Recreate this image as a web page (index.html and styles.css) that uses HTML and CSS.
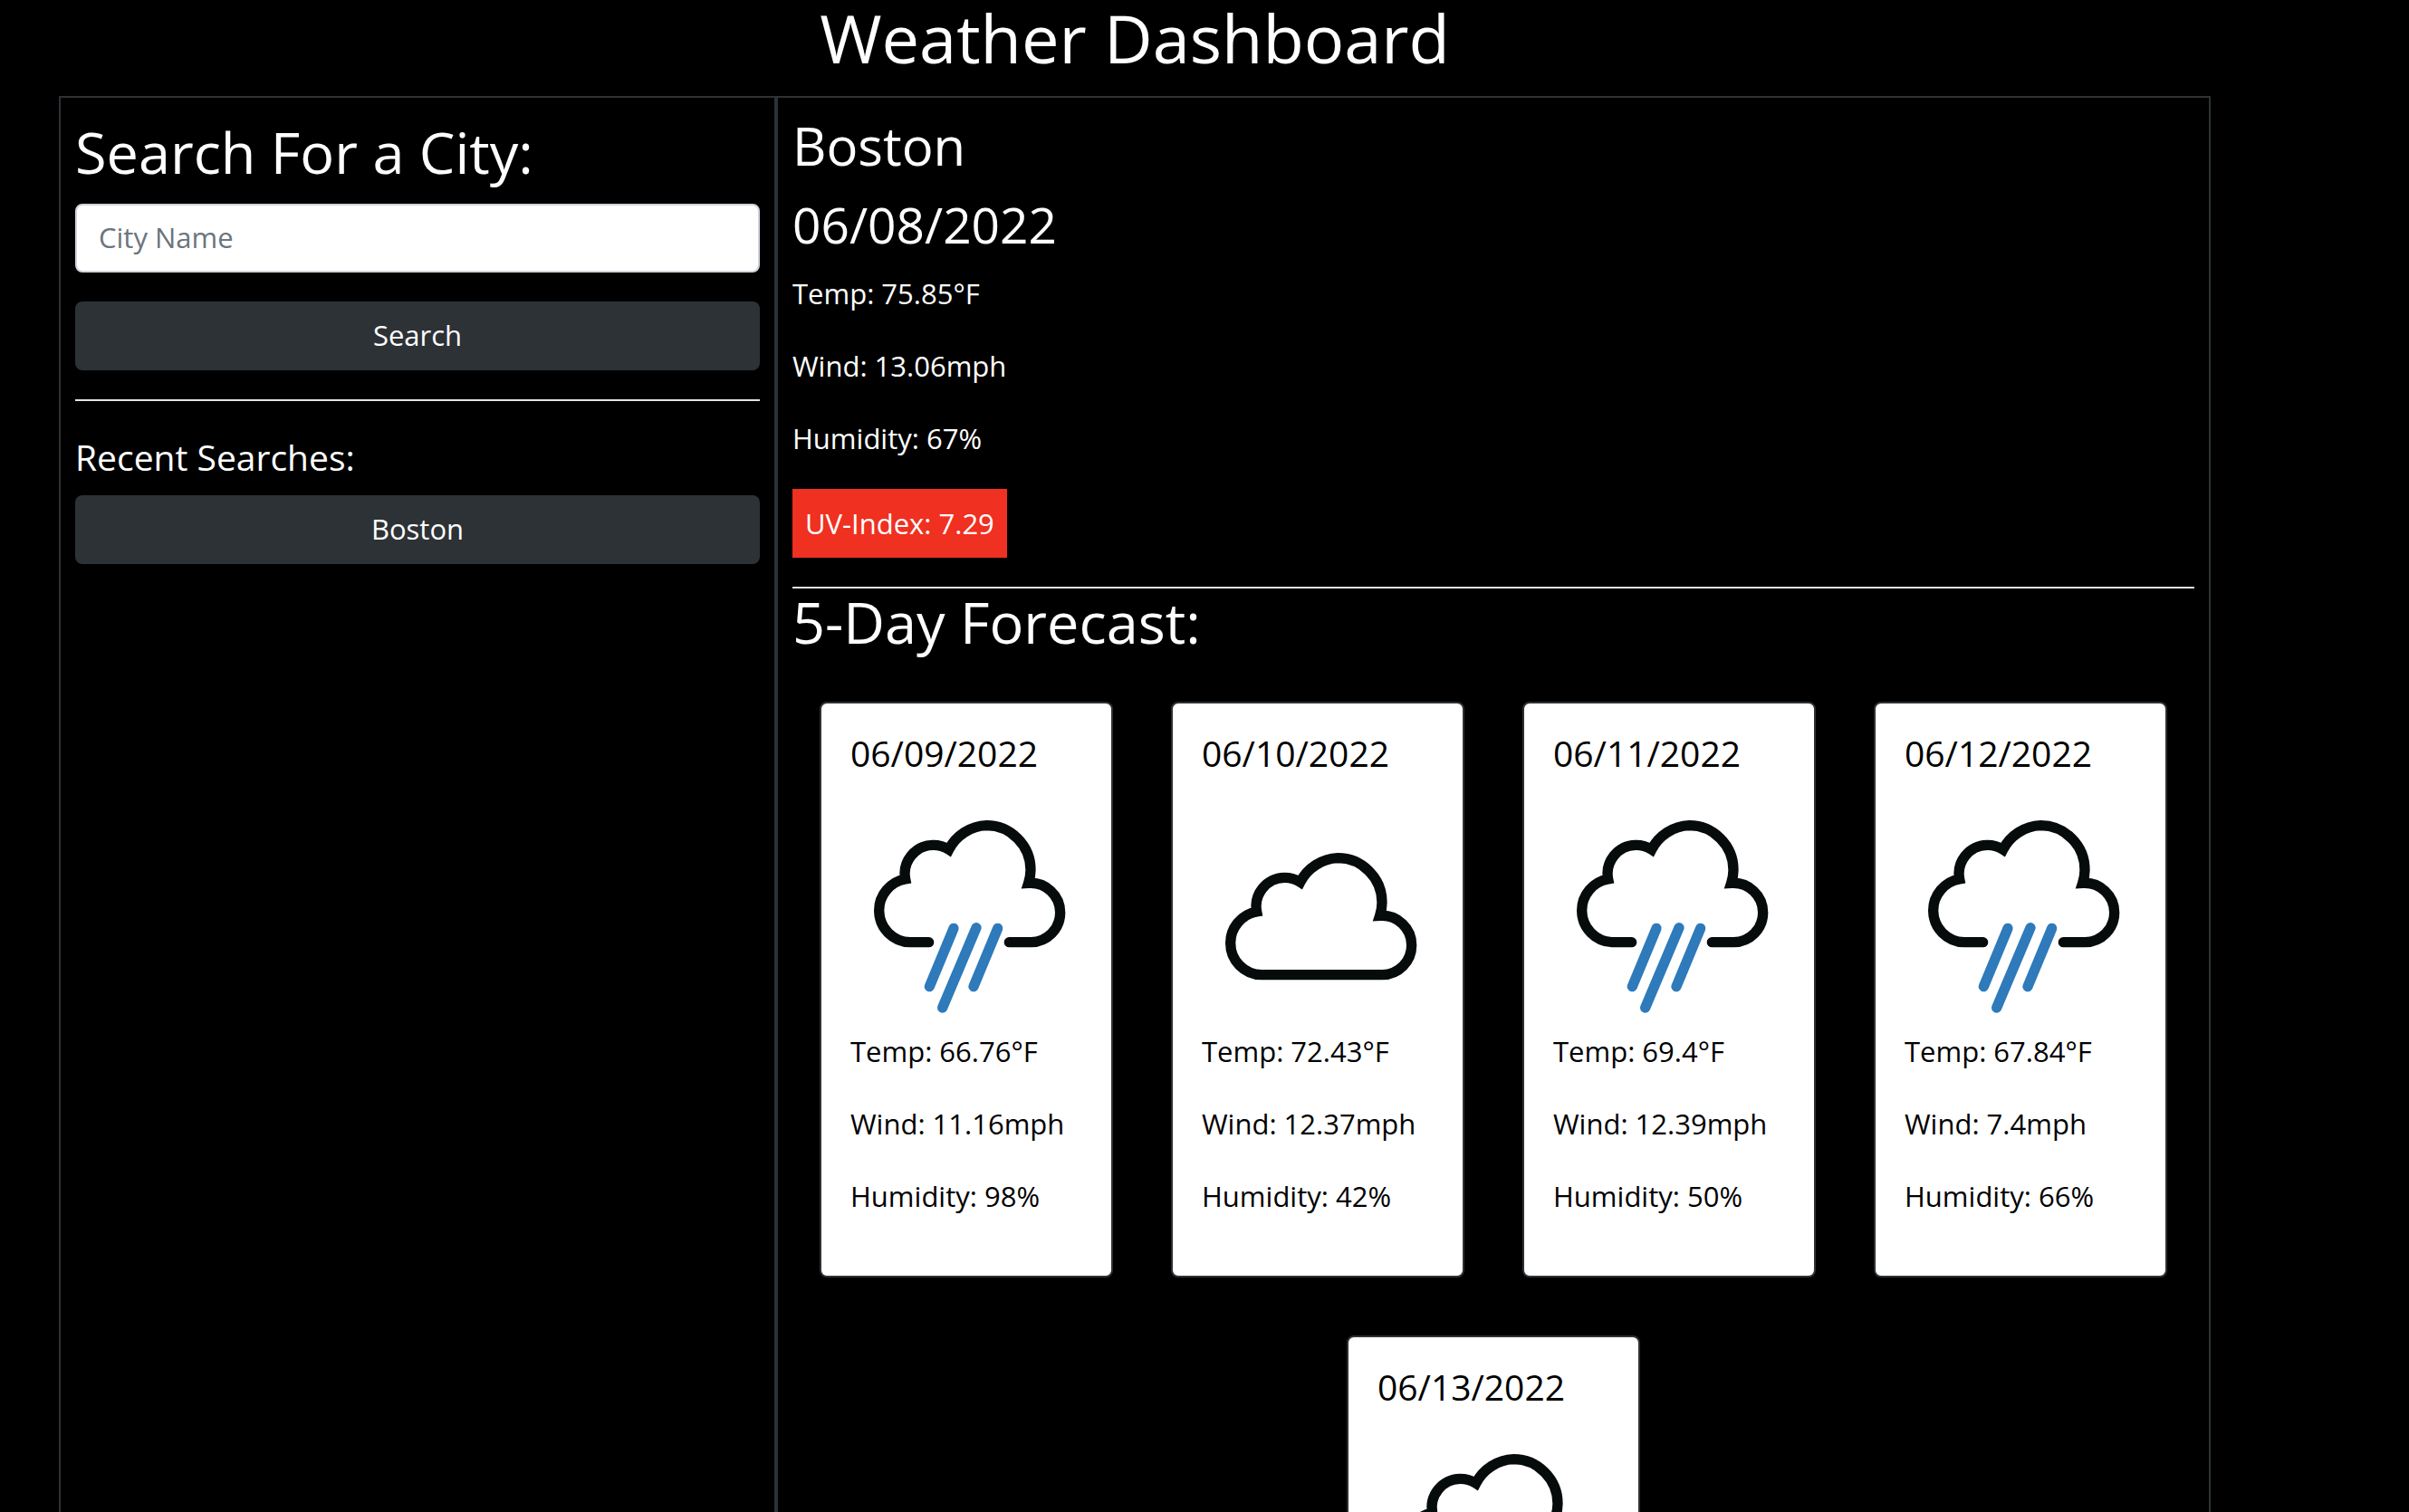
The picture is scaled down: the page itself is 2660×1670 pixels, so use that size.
FILE: index.html
```
<!DOCTYPE html>
<html lang="en">
<head>
<meta charset="utf-8">
<meta name="viewport" content="width=device-width, initial-scale=1">
<title>Weather Dashboard</title>
<link rel="stylesheet" href="styles.css">
</head>
<body>
<svg class="sprite" aria-hidden="true">
  <symbol id="rain" viewBox="-33 -24 768 768">
    <path class="cloud-line" d="M227 455H165A105 105 0 0 1 62 350A105 105 0 0 1 149 246A95 95 0 0 1 240 133A95 95 0 0 1 293 148A147 147 0 0 1 418 68A147 147 0 0 1 564 215A147 147 0 0 1 557 259A98 98 0 0 1 662 357A98 98 0 0 1 565 455H493"/>
    <path class="rain-line" d="M309 409L229 602M384 407L272 672M455 409L375 602"/>
  </symbol>
  <symbol id="cloud" viewBox="-33 -132 768 768">
    <path class="cloud-line" d="M165 455A105 105 0 0 1 62 350A105 105 0 0 1 149 246A95 95 0 0 1 240 133A95 95 0 0 1 293 148A147 147 0 0 1 418 68A147 147 0 0 1 564 215A147 147 0 0 1 557 259A98 98 0 0 1 662 357A98 98 0 0 1 565 455Z"/>
  </symbol>
</svg>
<div class="page">
  <header class="header"><h1 class="title">Weather Dashboard</h1></header>
  <main class="columns">
    <aside class="panel search-panel">
      <form class="search-form">
        <label class="heading" for="city">Search For a City:</label>
        <input class="field" id="city" type="text" placeholder="City Name">
        <button class="button" type="button">Search</button>
      </form>
      <hr class="rule">
      <h3 class="recent-title">Recent Searches:</h3>
      <button class="button" type="button">Boston</button>
    </aside>
    <section class="panel result-panel">
      <h2 class="city">Boston</h2>
      <p class="today">06/08/2022</p>
      <div class="current">
        <p>Temp: 75.85°F</p>
        <p>Wind: 13.06mph</p>
        <p>Humidity: 67%</p>
        <p class="uv">UV-Index: 7.29</p>
      </div>
      <hr class="rule">
      <h2 class="heading forecast-title">5-Day Forecast:</h2>
      <div class="cards">
        <article class="card">
          <h4 class="card-date">06/09/2022</h4>
          <svg class="icon" role="img" aria-label="Rain"><use href="#rain"/></svg>
          <div class="stats"><p>Temp: 66.76°F</p><p>Wind: 11.16mph</p><p>Humidity: 98%</p></div>
        </article>
        <article class="card">
          <h4 class="card-date">06/10/2022</h4>
          <svg class="icon" role="img" aria-label="Cloudy"><use href="#cloud"/></svg>
          <div class="stats"><p>Temp: 72.43°F</p><p>Wind: 12.37mph</p><p>Humidity: 42%</p></div>
        </article>
        <article class="card">
          <h4 class="card-date">06/11/2022</h4>
          <svg class="icon" role="img" aria-label="Rain"><use href="#rain"/></svg>
          <div class="stats"><p>Temp: 69.4°F</p><p>Wind: 12.39mph</p><p>Humidity: 50%</p></div>
        </article>
        <article class="card">
          <h4 class="card-date">06/12/2022</h4>
          <svg class="icon" role="img" aria-label="Rain"><use href="#rain"/></svg>
          <div class="stats"><p>Temp: 67.84°F</p><p>Wind: 7.4mph</p><p>Humidity: 66%</p></div>
        </article>
        <article class="card">
          <h4 class="card-date">06/13/2022</h4>
          <svg class="icon" role="img" aria-label="Rain"><use href="#rain"/></svg>
        </article>
      </div>
    </section>
  </main>
</div>
</body>
</html>
```
FILE: styles.css
```
* { box-sizing: border-box; }
body {
  margin: 0;
  background: #000;
  color: #fff;
  font-family: "Trebuchet MS", "Open Sans", "Noto Sans", sans-serif;
  font-size: 31px;
  font-weight: 500;
  line-height: 48px;
}
h1, h2, h3, h4, p { margin: 0; font-weight: 500; }
.sprite { display: none; }
.page { margin: 0 219px 0 65px; }
.header { padding-bottom: 22px; text-align: center; }
.title { font-size: 74px; line-height: 84px; }
.columns {
  display: grid;
  grid-template-columns: 1fr 2fr;
  border-top: 2px solid #2d3236;
}
.panel {
  min-width: 0;
  padding: 0 16px 32px;
  border: solid #2d3236;
  border-width: 0 2px;
}
.search-panel { padding-top: 28px; }
.result-panel { padding-top: 19px; }
.heading { display: block; font-size: 63px; line-height: 64px; }
.city { font-size: 58px; line-height: 68px; }
.search-form { display: flex; flex-direction: column; }
.field, .button {
  display: block;
  width: 100%;
  height: 76px;
  border-radius: 8px;
  font: inherit;
}
.field {
  margin: 25px 0 32px;
  padding: 0 24px 2px;
  border: 2px solid #ced4da;
  background: #fff;
  color: #212529;
}
.field::placeholder { color: #6c757d; opacity: 1; }
.button { padding: 0 0 2px; border: 0; background: #2d3236; color: #fff; }
.rule { height: 2px; margin: 32px 0 0; border: 0; background: #e3e3e3; }
.recent-title { margin: 38px 0 18px; font-size: 39px; line-height: 48px; }
.today { margin: 25px 0 24px; font-size: 55px; line-height: 56px; }
.current { display: flex; flex-direction: column; align-items: flex-start; gap: 32px; }
.uv { padding: 14px; background: #f03020; }
.forecast-title { margin: 5px 0 56px; }
.cards { display: flex; flex-wrap: wrap; justify-content: center; gap: 64px; }
.card {
  width: 324px;
  padding: 32px;
  border: 2px solid #2d3236;
  border-radius: 8px;
  background: #fff;
  color: #000;
}
.card-date { margin-bottom: 26px; font-size: 39px; line-height: 46px; }
.icon { display: block; width: 256px; height: 256px; }
.cloud-line, .rain-line { fill: none; stroke-width: 34; stroke-linecap: round; }
.cloud-line { stroke: #060b0c; }
.rain-line { stroke: #2e7aba; }
.stats p { margin-bottom: 32px; }
```
